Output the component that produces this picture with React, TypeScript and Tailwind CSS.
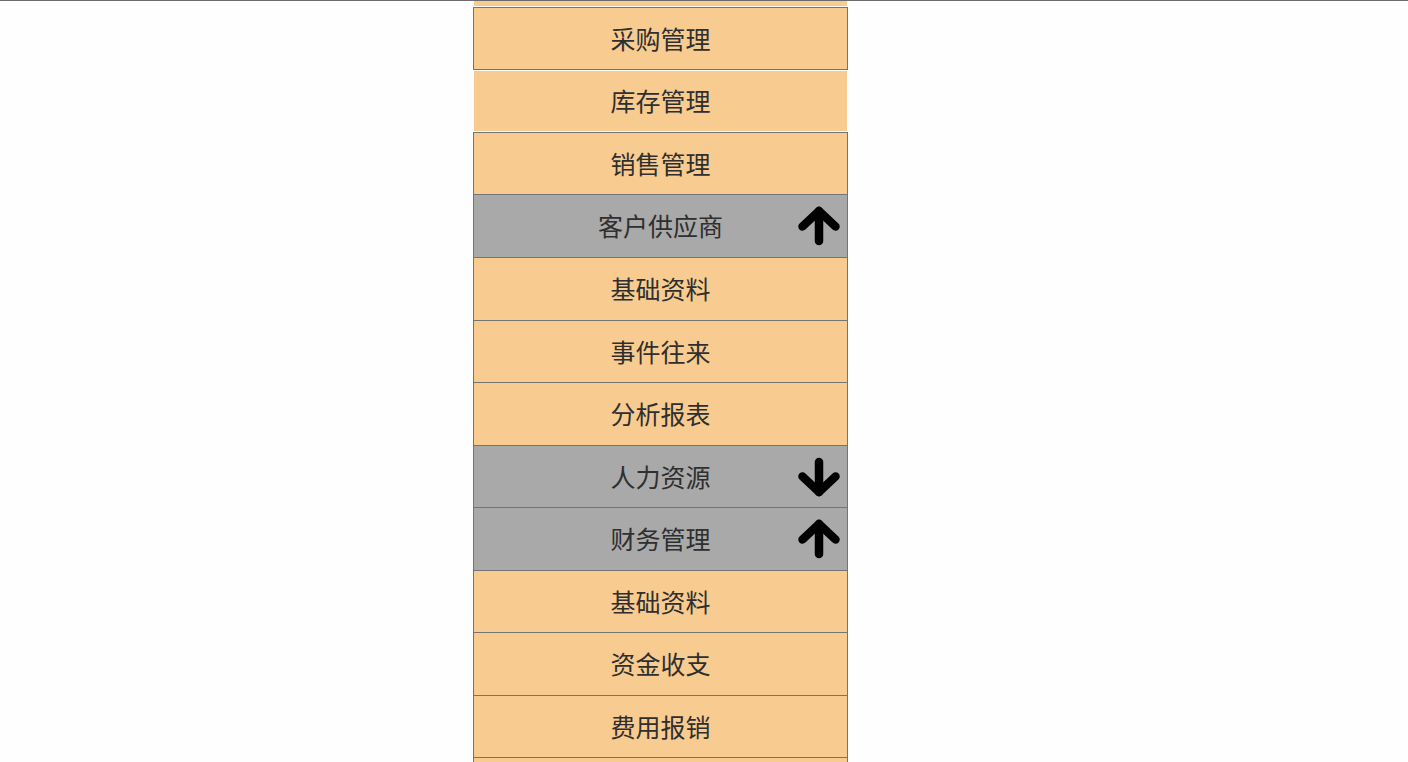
type Item = {
  label: string;
  h: string;
  kind: "plain" | "boxed" | "row" | "first";
  group?: boolean;
  arrow?: "up" | "down";
};

const items: Item[] = [
  { label: "", h: "h-[63px]", kind: "plain" },
  { label: "采购管理", h: "h-[63px]", kind: "boxed" },
  { label: "库存管理", h: "h-[62px]", kind: "plain" },
  { label: "销售管理", h: "h-[63px]", kind: "first" },
  { label: "客户供应商", h: "h-[63px]", kind: "row", group: true, arrow: "up" },
  { label: "基础资料", h: "h-[63px]", kind: "row" },
  { label: "事件往来", h: "h-[62px]", kind: "row" },
  { label: "分析报表", h: "h-[63px]", kind: "row" },
  { label: "人力资源", h: "h-[62px]", kind: "row", group: true, arrow: "down" },
  { label: "财务管理", h: "h-[63px]", kind: "row", group: true, arrow: "up" },
  { label: "基础资料", h: "h-[62px]", kind: "row" },
  { label: "资金收支", h: "h-[63px]", kind: "row" },
  { label: "费用报销", h: "h-[62px]", kind: "row" },
  { label: "", h: "h-[63px]", kind: "row" },
];

function Arrow({ dir }: { dir: "up" | "down" }) {
  return (
    <svg
      width="42"
      height="40"
      viewBox="0 0 42 40"
      className={dir === "down" ? "rotate-180" : ""}
      fill="none"
      stroke="#000"
      strokeWidth="8.5"
      strokeLinecap="round"
      strokeLinejoin="round"
    >
      <path d="M21 5 L21 35" />
      <path d="M4.5 20.5 L21 5 L37.5 20.5" />
    </svg>
  );
}

function MenuItem({ item }: { item: Item }) {
  const border =
    item.kind === "plain"
      ? "border border-white"
      : item.kind === "boxed" || item.kind === "first"
        ? "border border-[#747474]"
        : "border-x border-b border-[#747474]";
  const bg = item.group ? "bg-[#a9a9a9]" : "bg-[#f8cc91]";
  return (
    <div
      className={`relative flex items-center justify-center ${item.h} ${border} ${bg}`}
    >
      <span className="-mt-[1px] text-[25px] leading-none text-[#2f2f2f]">{item.label}</span>
      {item.arrow && (
        <span className="absolute right-[7px] top-1/2 -translate-y-1/2 flex">
          <Arrow dir={item.arrow} />
        </span>
      )}
    </div>
  );
}

export default function App() {
  return (
    <div
      className="h-[762px] w-full overflow-hidden border-t border-[#6b6b6b] bg-[#fefefe]"
      style={{ fontFamily: '"Noto Sans CJK SC", "Noto Sans", sans-serif' }}
    >
      <div className="ml-[473px] -mt-[57px] flex w-[375px] flex-col">
        {items.map((item, i) => (
          <MenuItem key={i} item={item} />
        ))}
      </div>
    </div>
  );
}
